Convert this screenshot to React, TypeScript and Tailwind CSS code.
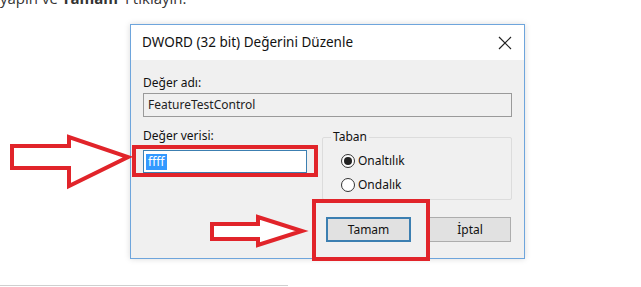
import React from "react";

const ui = { fontFamily: '"Noto Sans", "Liberation Sans", sans-serif' };

function Radio({ checked, label }: { checked?: boolean; label: string }) {
  return (
    <div className="flex items-center gap-[3px] h-[24px]">
      <span className="flex h-[14px] w-[14px] items-center justify-center rounded-full border border-[#333] bg-white">
        {checked && <span className="h-[8px] w-[8px] rounded-full bg-[#222]" />}
      </span>
      <span className="text-[12px] text-[#111]">{label}</span>
    </div>
  );
}

export default function App() {
  return (
    <div className="relative h-[287px] w-[641px] overflow-hidden bg-white" style={ui}>
      {/* page text above, cut off */}
      <p
        className="mt-[-13px] h-[22px] whitespace-nowrap text-[15px] leading-[22px] text-[#333]"
        style={{ fontFamily: '"Open Sans", sans-serif' }}
      >
        yapın ve <b>Tamam</b> 'ı tıklayın.
      </p>

      {/* dialog */}
      <div className="ml-[130px] mt-[15px] flex h-[235px] w-[395px] flex-col border border-[#6ea5dc] bg-[#f0f0f0] shadow-[0_0_6px_rgba(0,0,0,0.15)]">
        <div className="flex h-[35px] items-center justify-between bg-white pl-[11px] pr-[11px]">
          <span className="text-[13.5px] text-[#111]">DWORD (32 bit) Değerini Düzenle</span>
          <svg width="14" height="14" viewBox="0 0 14 14" className="mr-[1px]">
            <path d="M1 1 L13 13 M13 1 L1 13" stroke="#222" strokeWidth="1.2" />
          </svg>
        </div>

        <div className="flex flex-col px-[12px] pt-[14px]">
          <span className="h-[17px] text-[12px] leading-[17px] text-[#111]">Değer adı:</span>
          <div className="mt-[2px] flex h-[24px] items-center border border-[#9a9a9a] bg-[#f0f0f0] pl-[4px] text-[12px] text-[#222]">
            FeatureTestControl
          </div>

          <div className="mt-[10px] flex items-start gap-[15px]">
            <div className="flex w-[164px] flex-col">
              <span className="h-[17px] text-[12px] leading-[17px] text-[#111]">Değer verisi:</span>
              <div className="mt-[6px] flex h-[23px] items-center border border-[#3c7fb1] bg-white pl-[2px]">
                <span className="bg-[#3399ff] px-[2px] text-[12px] leading-[16px] text-white">ffff</span>
              </div>
            </div>
            <fieldset className="mt-[2px] h-[71px] w-[190px] rounded-[2px] border border-[#dcdcdc] pl-[18px]">
              <legend className="ml-[-10px] px-[2px] text-[12px] leading-[16px] text-[#111]">Taban</legend>
              <div className="mt-[4px]">
                <Radio checked label="Onaltılık" />
                <Radio label="Ondalık" />
              </div>
            </fieldset>
          </div>

          <div className="mt-[17px] flex justify-end gap-[18px] pr-[1px]">
            <button className="h-[25px] w-[85px] border-2 border-[#3c7fb1] bg-[#e1e1e1] text-[12px] text-[#111]">
              Tamam
            </button>
            <button className="h-[25px] w-[82px] border border-[#adadad] bg-[#e1e1e1] text-[12px] text-[#111]">
              İptal
            </button>
          </div>
        </div>
      </div>

      {/* box below */}
      <div className="ml-0 mt-[26px] h-[10px] w-[288px] border-t border-[#cfcfcf]" />

      {/* annotations */}
      <div className="pointer-events-none absolute left-[132px] top-[145px] h-[32px] w-[186px] border-[4px] border-[#e1242a]" />
      <div className="pointer-events-none absolute left-[312px] top-[199px] h-[62px] w-[118px] border-[4px] border-[#e1242a]" />
      <svg className="pointer-events-none absolute left-0 top-0" width="641" height="287">
        <polygon
          points="12,146 69,146 69,137 128,157 69,186 69,168 12,168"
          fill="white"
          stroke="#e1242a"
          strokeWidth="4"
          strokeLinejoin="miter"
        />
        <polygon
          points="212,224 258,224 258,217 302,231 258,245 258,239 212,239"
          fill="white"
          stroke="#e1242a"
          strokeWidth="4"
          strokeLinejoin="miter"
        />
      </svg>
    </div>
  );
}
